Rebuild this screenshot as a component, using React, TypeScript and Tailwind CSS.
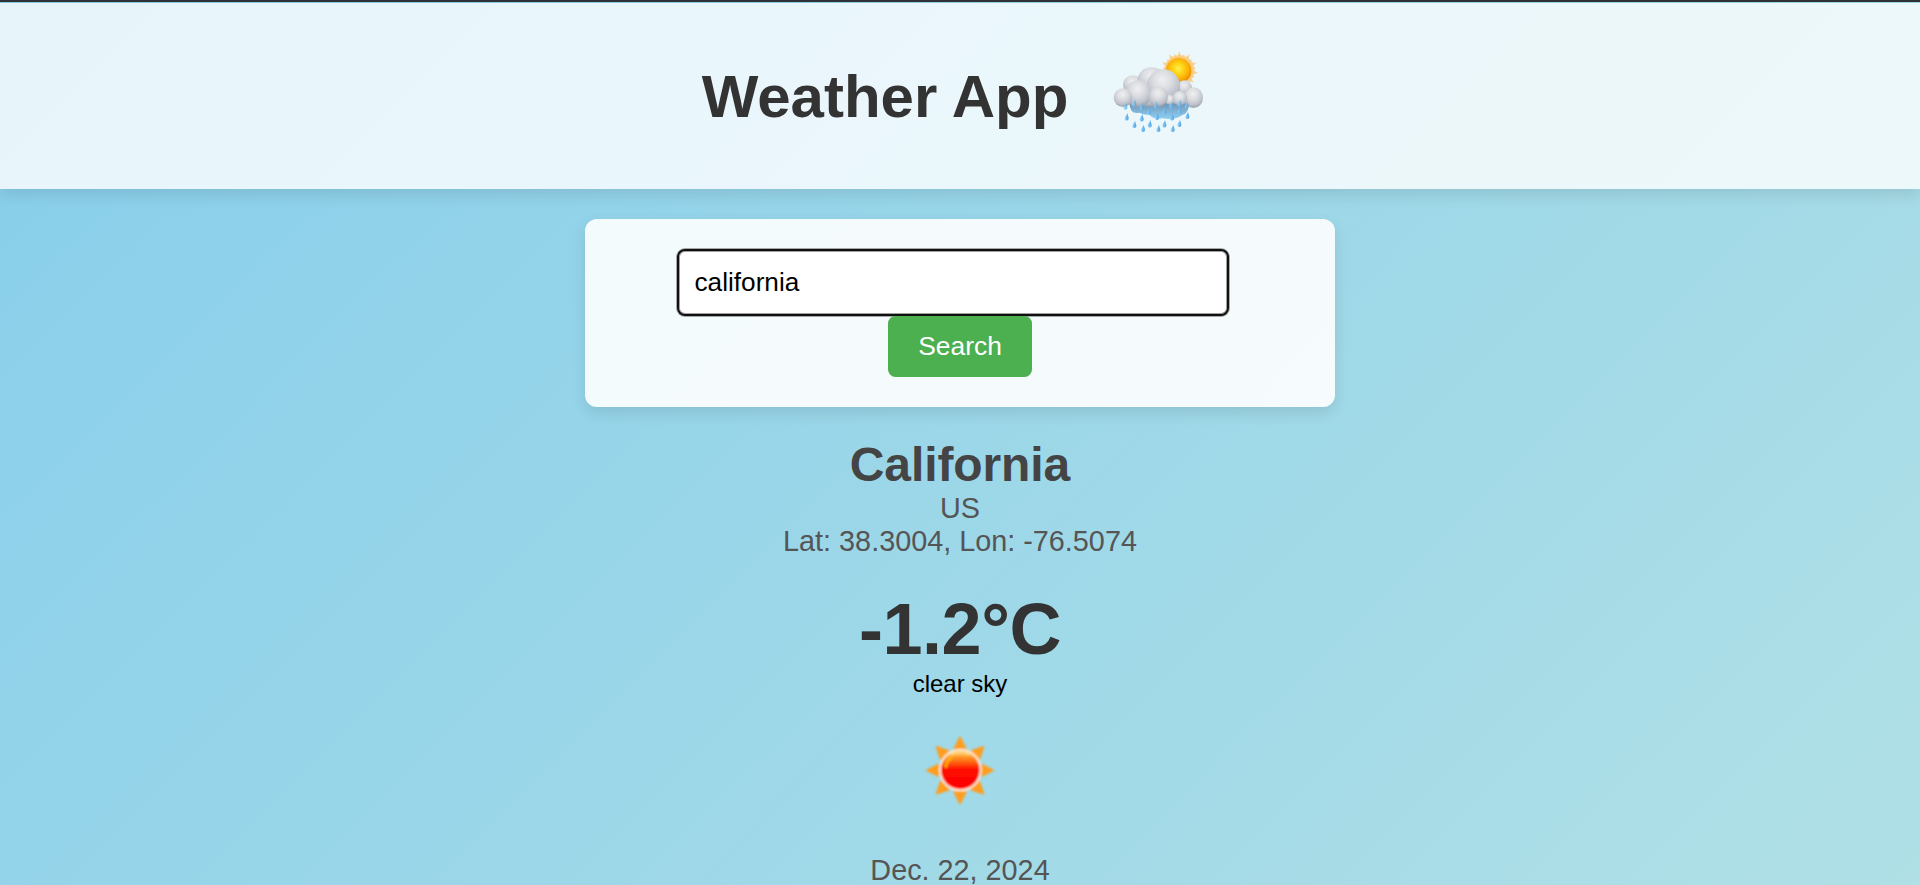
const puffs: [number, number, number, number][] = [
  [98, 134, 29, 28],
  [155, 119, 42, 37],
  [253, 143, 23, 22],
  [150, 162, 60, 38],
  [190, 138, 50, 50],
  [115, 161, 39, 40],
  [69, 173, 28, 28],
  [280, 173, 29, 31],
  [210, 180, 15, 15],
  [239, 175, 22, 22],
  [175, 170, 29, 30],
];

const drops: [number, number][] = [
  [76, 200], [103, 191], [125, 200], [168, 196], [214, 196], [239, 191], [260, 196],
  [147, 215], [193, 215], [239, 213], [80, 232], [125, 235], [171, 231], [216, 232], [262, 228],
  [103, 255], [149, 253], [193, 253], [238, 252], [129, 267], [175, 267], [218, 267],
];

const headerRays = Array.from({ length: 22 }, (_, i) => i * (360 / 22));
const sunRays = [0, 45, 90, 135, 180, 225, 270, 315];

function RainCloudIcon() {
  return (
    <svg width="120" height="100" viewBox="0 0 360 300" className="shrink-0">
      <defs>
        <radialGradient id="puff" cx="0.47" cy="0.32" r="0.78">
          <stop offset="0" stopColor="#f0eff0" />
          <stop offset="0.35" stopColor="#dbdde1" />
          <stop offset="0.68" stopColor="#bdc1ca" />
          <stop offset="1" stopColor="#808999" />
        </radialGradient>
        <radialGradient id="orb" cx="0.48" cy="0.42" r="0.6">
          <stop offset="0" stopColor="#fff04a" />
          <stop offset="0.4" stopColor="#ffcf12" />
          <stop offset="0.75" stopColor="#f9a806" />
          <stop offset="1" stopColor="#e57f04" />
        </radialGradient>
        <linearGradient id="rain" x1="0" y1="0" x2="0" y2="1">
          <stop offset="0" stopColor="#6e93b5" />
          <stop offset="1" stopColor="#8fd0f3" />
        </linearGradient>
        <linearGradient id="drop" x1="0" y1="0" x2="1" y2="0">
          <stop offset="0" stopColor="#9bd7fa" />
          <stop offset="1" stopColor="#4b9fe0" />
        </linearGradient>
        <filter id="soft" x="-10%" y="-10%" width="120%" height="120%">
          <feGaussianBlur stdDeviation="1.6" />
        </filter>
      </defs>
      <g filter="url(#soft)">
        <circle cx="238" cy="91" r="46" fill="#ffcf80" opacity="0.55" />
        {headerRays.map((angle, i) => (
          <path
            key={angle}
            d={i % 2 ? "M229 57 L238 41 L247 57Z" : "M229 57 L238 34 L247 57Z"}
            fill="#fcc067"
            opacity="0.65"
            transform={`rotate(${angle} 238 91)`}
          />
        ))}
        <circle cx="236" cy="92" r="38" fill="url(#orb)" />
        <path
          d="M88 188 Q90 225 118 218 Q133 226 148 224 Q162 239 188 235 Q225 242 247 225 Q267 221 266 189Z"
          fill="url(#rain)"
        />
        {puffs.map(([cx, cy, rx, ry]) => (
          <ellipse key={`${cx}-${cy}`} cx={cx} cy={cy} rx={rx} ry={ry} fill="url(#puff)" />
        ))}
        {drops.map(([x, y]) => (
          <path
            key={`${x}-${y}`}
            d="M2 -13 C3 -7 6.500 -1 6 4 C5 11 -5 11 -6 4 C-6 -1 0 -6 2 -13Z"
            fill="url(#drop)"
            opacity={y < 225 ? 0.75 : 1}
            transform={`translate(${x} ${y})`}
          />
        ))}
      </g>
    </svg>
  );
}

function ClearSkyIcon() {
  return (
    <svg width="120" height="100" viewBox="0 0 360 300" className="shrink-0">
      <defs>
        <linearGradient id="disc" x1="0" y1="0" x2="0" y2="1">
          <stop offset="0" stopColor="#ffc653" />
          <stop offset="0.15" stopColor="#ff9f2d" />
          <stop offset="0.32" stopColor="#ff5a0c" />
          <stop offset="0.48" stopColor="#fe0b00" />
          <stop offset="1" stopColor="#ff0000" />
        </linearGradient>
        <filter id="haze" x="-10%" y="-10%" width="120%" height="120%">
          <feGaussianBlur stdDeviation="2.5" />
        </filter>
      </defs>
      <g filter="url(#haze)">
        {sunRays.map((angle) => (
          <path
            key={angle}
            d="M159 89 L178 50 L182 50 L201 89Z"
            fill="#ff9d1c"
            transform={`rotate(${angle} 180 151)`}
          />
        ))}
        <circle cx="181" cy="150" r="64" fill="#fff0d8" />
        <circle cx="181" cy="150" r="58" fill="url(#disc)" />
        <path d="M138 143 Q137 124 155 113" fill="none" stroke="#ffc400" strokeWidth="6" />
        <path d="M153 104 Q181 93 209 104" fill="none" stroke="#ffd987" strokeWidth="6" />
      </g>
    </svg>
  );
}

export default function App() {
  return (
    <div className="flex h-[885px] flex-col overflow-hidden border-t-2 border-[#2f3136] bg-[linear-gradient(135deg,#87ceeb,#b0e0e6)] font-['Liberation_Sans',Arial,sans-serif]">
      <header className="mt-px flex h-[186px] shrink-0 items-start justify-center gap-8 bg-white/80 pt-[37px] pl-[2px] shadow-[0_6px_15px_rgba(0,0,0,0.1)]">
        <h1 className="mt-[27px] text-[60px] leading-[60px] font-bold text-[#333]">Weather App</h1>
        <RainCloudIcon />
      </header>

      <main className="flex flex-col items-center">
        <form
          onSubmit={(event) => event.preventDefault()}
          className="mt-[30px] flex h-[188px] w-[750px] flex-col items-center rounded-[12px] bg-white/90 pt-[30px] shadow-[0_6px_15px_rgba(0,0,0,0.1)]"
        >
          <input
            defaultValue="california"
            className="mr-[15px] h-[67px] w-[552px] shrink-0 rounded-[8px] border-2 border-[#101010] bg-white px-4 text-[26.2px] text-black shadow-[0_0_0_1px_rgba(16,16,16,0.35),inset_0_0_0_1px_rgba(16,16,16,0.4)] outline-none"
          />
          <button className="h-[61px] w-[144px] shrink-0 rounded-[7.5px] bg-[#4caf50] text-[26.4px] text-white">
            Search
          </button>
        </form>

        <section className="mt-[30px] flex flex-col items-center text-[28.8px] leading-[33px] text-[#555]">
          <h2 className="text-[48px] leading-[55px] font-bold tracking-[-0.1px] text-[#444]">California</h2>
          <p>US</p>
          <p>Lat: 38.3004, Lon: -76.5074</p>
        </section>

        <section className="mt-[30px] flex flex-col items-center">
          <p className="text-[72px] leading-[82px] font-bold tracking-[-0.5px] text-[#333]">-1.2°C</p>
          <p className="text-[24px] leading-[27px] text-black">clear sky</p>
        </section>

        <div className="mt-[23px]">
          <ClearSkyIcon />
        </div>
        <p className="mt-[34px] text-[28.8px] leading-[33px] text-[#555]">Dec. 22, 2024</p>
      </main>
    </div>
  );
}
